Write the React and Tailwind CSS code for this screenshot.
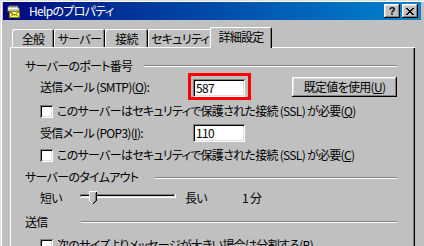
import React from "react";

const raised =
  "shadow-[inset_-1px_-1px_0_#000,inset_1px_1px_0_#fff,inset_-2px_-2px_0_#808080,inset_2px_2px_0_#dfdfdf]";
const sunken =
  "shadow-[inset_1px_1px_0_#808080,inset_-1px_-1px_0_#fff,inset_2px_2px_0_#000,inset_-2px_-2px_0_#dfdfdf]";

const tabs = [
  { label: "全般", cls: "w-[42px]" },
  { label: "サーバー", cls: "w-[51px]" },
  { label: "接続", cls: "w-[43px]" },
  { label: "セキュリティ", cls: "w-[64px]" },
];

const Key = ({ children }) => (
  <span className="underline underline-offset-1">{children}</span>
);

const Checkbox = () => (
  <div className={`w-[13px] h-[13px] bg-white shrink-0 ${sunken}`} />
);

const Header = ({ text, lineCls, rowCls }) => (
  <div className={`flex items-center pl-[15px] pr-[18px] ${rowCls}`}>
    <span>{text}</span>
    <div
      className={`ml-auto h-[2px] border-t border-b border-t-[#808080] border-b-white ${lineCls}`}
    />
  </div>
);

const TitleIcon = () => (
  <svg width="16" height="16" viewBox="0 0 16 16" shapeRendering="crispEdges">
    <path d="M2 5 L5 2 L12 2 L14 5 L14 8 L2 8 Z" fill="#c0c0c0" stroke="#404040" />
    <path d="M3 5 L13 5" stroke="#fff" />
    <path d="M5 3 L11 3" stroke="#808080" />
    <rect x="4.5" y="8.5" width="10" height="6" fill="#ffff80" stroke="#808000" />
    <path d="M4.5 8.5 L9.5 12 L14.5 8.5" fill="none" stroke="#808000" />
    <path d="M4.5 14.5 L8 11.5 M14.5 14.5 L11 11.5" fill="none" stroke="#c0a000" />
  </svg>
);

const Slider = () => (
  <svg width="96" height="14" viewBox="0 0 96 14" shapeRendering="crispEdges">
    <rect x="0" y="3" width="95" height="1" fill="#808080" />
    <rect x="0" y="3" width="1" height="3" fill="#808080" />
    <rect x="1" y="4" width="93" height="1" fill="#000" />
    <rect x="1" y="5" width="93" height="1" fill="#dfdfdf" />
    <rect x="0" y="6" width="96" height="1" fill="#fff" />
    <rect x="95" y="3" width="1" height="4" fill="#fff" />
    <path d="M9.5 0.5 L16.5 0.5 L16.5 9.5 L13 13 L9.5 9.5 Z" fill="#c0c0c0" stroke="none" />
    <path d="M9.5 9.5 L9.5 0.5 L16.5 0.5" fill="none" stroke="#fff" />
    <path d="M9.5 9.5 L12.5 12.5" fill="none" stroke="#fff" />
    <path d="M16.5 0.5 L16.5 9.5 L13 13" fill="none" stroke="#000" />
    <path d="M15.5 1.5 L15.5 9.5 L13 12" fill="none" stroke="#808080" />
  </svg>
);

export default function App() {
  return (
    <div className="w-[424px] h-[246px] overflow-hidden bg-[#c0c0c0] flex flex-col pt-[2px] pl-[3px] pr-[3px] shadow-[inset_1px_1px_0_#dfdfdf,inset_2px_2px_0_#fff] font-['Noto_Sans_CJK_JP','Noto_Sans_CJK_SC',sans-serif] text-[12px] leading-[14px] tracking-[-0.7px] text-black [font-feature-settings:'palt']">
      {/* Title bar */}
      <div className="h-[18px] flex items-center bg-linear-to-r from-[#000080] to-[#1084d0] shrink-0">
        <div className="ml-[2px]">
          <TitleIcon />
        </div>
        <span className="ml-[8px] text-white">Helpのプロパティ</span>
        <div className="ml-auto mr-[3px] flex gap-[2px]">
          <div
            className={`w-[16px] h-[14px] bg-[#c0c0c0] flex items-center justify-center font-['Liberation_Sans',sans-serif] font-bold text-[11px] leading-none tracking-normal ${raised}`}
          >
            ?
          </div>
          <div
            className={`w-[16px] h-[14px] bg-[#c0c0c0] flex items-center justify-center ${raised}`}
          >
            <svg width="8" height="7" viewBox="0 0 8 7" shapeRendering="crispEdges">
              <path
                d="M0 0h2v1h-2z M6 0h2v1h-2z M1 1h2v1h-2z M5 1h2v1h-2z M2 2h4v1h-4z M3 3h2v1h-2z M2 4h4v1h-4z M1 5h2v1h-2z M5 5h2v1h-2z M0 6h2v1h-2z M6 6h2v1h-2z"
                fill="#000"
              />
            </svg>
          </div>
        </div>
      </div>

      {/* Tabs */}
      <div className="mt-[7px] ml-[7px] flex items-end h-[20px] shrink-0">
        <div className="w-[2px]" />
        {tabs.map((t) => (
          <div
            key={t.label}
            className={`h-[18px] flex items-center justify-center rounded-t-[2px] shadow-[inset_1px_1px_0_#fff,inset_-1px_0_0_#000,inset_-2px_0_0_#808080] ${t.cls}`}
          >
            <span className="pt-[1px]">{t.label}</span>
          </div>
        ))}
        <div className="relative z-10 -ml-[2px] -mb-px w-[62px] h-[21px] bg-[#c0c0c0] flex items-center justify-center rounded-t-[2px] shadow-[inset_1px_1px_0_#fff,inset_-1px_0_0_#000,inset_-2px_0_0_#808080]">
          <span className="pb-[1px]">詳細設定</span>
        </div>
      </div>

      {/* Panel */}
      <div className="ml-[7px] w-[405px] flex-1 flex flex-col pt-[12px] shadow-[inset_1px_1px_0_#fff,inset_-1px_0_0_#000,inset_-2px_0_0_#808080]">
        <Header text="サーバーのポート番号" lineCls="w-[253px]" rowCls="h-[14px]" />

        <div className="h-[27px] flex items-center pl-[30px]">
          <div className="w-[148px]">
            送信メール (SMTP)(<Key>O</Key>):
          </div>
          <div className="w-[63px] h-[27px] border-[3px] border-[#ff0000] pl-[2px] pt-[3px]">
            <div className={`w-[52px] h-[18px] bg-white flex items-center pl-[3px] ${sunken}`}>
              587
            </div>
          </div>
          <div
            className={`ml-[41px] w-[105px] h-[20px] flex items-center justify-center ${raised}`}
          >
            既定値を使用(<Key>U</Key>)
          </div>
        </div>

        <div className="h-[22px] flex items-center pl-[30px]">
          <Checkbox />
          <span className="ml-[4px]">
            このサーバーはセキュリティで保護された接続 (SSL) が必要(<Key>Q</Key>)
          </span>
        </div>

        <div className="h-[22px] flex items-center pl-[30px]">
          <div className="w-[153px]">
            受信メール (POP3)(<Key>I</Key>):
          </div>
          <div className={`w-[52px] h-[18px] bg-white flex items-center pl-[3px] ${sunken}`}>
            110
          </div>
        </div>

        <div className="h-[22px] flex items-center pl-[30px]">
          <Checkbox />
          <span className="ml-[4px]">
            このサーバーはセキュリティで保護された接続 (SSL) が必要(<Key>C</Key>)
          </span>
        </div>

        <Header text="サーバーのタイムアウト" lineCls="w-[242px] mt-[2px]" rowCls="h-[22px]" />

        <div className="h-[20px] flex items-center pl-[30px]">
          <div className="w-[40px]">短い</div>
          <Slider />
          <div className="ml-[9px] w-[57px]">長い</div>
          <div>1 分</div>
        </div>

        <Header text="送信" lineCls="w-[316px]" rowCls="h-[28px]" />

        <div className="h-[18px] flex items-center pl-[30px]">
          <Checkbox />
          <span className="ml-[4px]">
            次のサイズよりメッセージが大きい場合は分割する(<Key>B</Key>)
          </span>
        </div>
      </div>
    </div>
  );
}
